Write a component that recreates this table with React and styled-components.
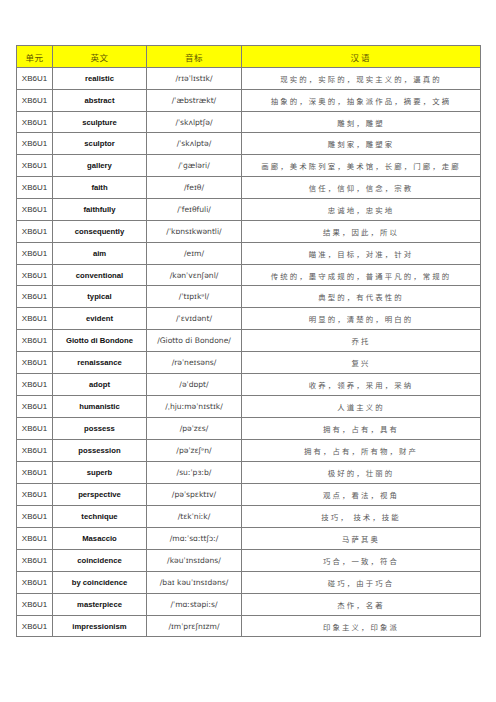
import React from "react";
import styled, { createGlobalStyle } from "styled-components";

const Global = createGlobalStyle`
  html, body { margin: 0; padding: 0; background: #ffffff; }
  body { font-family: "Liberation Sans", Arial, sans-serif; }
`;

const Page = styled.div`
  width: 496px;
  height: 702px;
  padding: 45px 0 0 16px;
  box-sizing: border-box;
  background: #fff;
`;

const Table = styled.table`
  border-collapse: collapse;
  table-layout: fixed;
  width: 464px;
`;

const Col = styled.col`
  width: ${(p) => p.$w}px;
`;

const Row = styled.tr`
  height: ${(p) => (p.$short ? 21 : 22)}px;
`;

const HeadCell = styled.th`
  background: #ffff00;
  border: 1px solid #7d7d7d;
  padding: 0;
  font-weight: normal;
  font-family: "Noto Sans CJK SC", sans-serif;
  font-size: 8.5px;
  color: #5e5500;
  text-align: center;
  vertical-align: middle;
  letter-spacing: ${(p) => (p.$wide ? "2px" : "0.5px")};
`;

const Cell = styled.td`
  border: 1px solid #7d7d7d;
  padding: 0;
  text-align: center;
  vertical-align: middle;
  white-space: nowrap;
  overflow: hidden;
`;

const UnitCell = styled(Cell)`
  font-family: "Liberation Sans", Arial, sans-serif;
  font-size: 8px;
  color: #333;
`;

const WordCell = styled(Cell)`
  font-family: "Liberation Sans", Arial, sans-serif;
  font-size: 7.7px;
  font-weight: bold;
  color: #111;
`;

const IpaCell = styled(Cell)`
  font-family: "DejaVu Sans", "Liberation Sans", sans-serif;
  font-size: 7.6px;
  color: #444;
`;

const ZhCell = styled(Cell)`
  font-family: "Noto Sans CJK SC", sans-serif;
  font-size: 7.4px;
  letter-spacing: 2.1px;
  color: #5a5a5a;
`;

const rows = [
  ["realistic", "/rɪəˈlɪstɪk/", "现实的，实际的，现实主义的，逼真的"],
  ["abstract", "/ˈæbstrækt/", "抽象的，深奥的，抽象派作品，摘要，文摘"],
  ["sculpture", "/ˈskʌlptʃə/", "雕刻，雕塑", true],
  ["sculptor", "/ˈskʌlptə/", "雕刻家，雕塑家"],
  ["gallery", "/ˈɡæləri/", "画廊，美术陈列室，美术馆，长廊，门廊，走廊"],
  ["faith", "/feɪθ/", "信任，信仰，信念，宗教"],
  ["faithfully", "/ˈfeɪθfuli/", "忠诚地，忠实地"],
  ["consequently", "/ˈkɒnsɪkwəntli/", "结果，因此，所以"],
  ["aim", "/eɪm/", "瞄准，目标，对准，针对"],
  ["conventional", "/kənˈvɛnʃənl/", "传统的，墨守成规的，普通平凡的，常规的", true],
  ["typical", "/ˈtɪpɪkᵊl/", "典型的，有代表性的"],
  ["evident", "/ˈɛvɪdənt/", "明显的，清楚的，明白的"],
  ["Giotto di Bondone", "/Giotto di Bondone/", "乔托"],
  ["renaissance", "/rəˈneɪsəns/", "复兴"],
  ["adopt", "/əˈdɒpt/", "收养，领养，采用，采纳"],
  ["humanistic", "/ˌhjuːməˈnɪstɪk/", "人道主义的"],
  ["possess", "/pəˈzɛs/", "拥有，占有，具有"],
  ["possession", "/pəˈzɛʃᵊn/", "拥有，占有，所有物，财产"],
  ["superb", "/suːˈpɜːb/", "极好的，壮丽的"],
  ["perspective", "/pəˈspɛktɪv/", "观点，看法，视角"],
  ["technique", "/tɛkˈniːk/", "技巧， 技术，技能"],
  ["Masaccio", "/mɑːˈsɑːttʃɔː/", "马萨其奥"],
  ["coincidence", "/kəuˈɪnsɪdəns/", "巧合，一致，符合"],
  ["by coincidence", "/baɪ kəuˈɪnsɪdəns/", "碰巧，由于巧合"],
  ["masterpiece", "/ˈmɑːstəpiːs/", "杰作，名著"],
  ["impressionism", "/ɪmˈprɛʃnɪzm/", "印象主义，印象派", true],
];

export default function App() {
  return (
    <Page>
      <Global />
      <Table>
        <colgroup>
          <Col $w={36} />
          <Col $w={94} />
          <Col $w={95} />
          <Col $w={239} />
        </colgroup>
        <thead>
          <Row>
            <HeadCell>单元</HeadCell>
            <HeadCell>英文</HeadCell>
            <HeadCell>音标</HeadCell>
            <HeadCell $wide>汉语</HeadCell>
          </Row>
        </thead>
        <tbody>
          {rows.map(([word, ipa, zh, short]) => (
            <Row key={word} $short={short}>
              <UnitCell>XB6U1</UnitCell>
              <WordCell>{word}</WordCell>
              <IpaCell>{ipa}</IpaCell>
              <ZhCell>{zh}</ZhCell>
            </Row>
          ))}
        </tbody>
      </Table>
    </Page>
  );
}
